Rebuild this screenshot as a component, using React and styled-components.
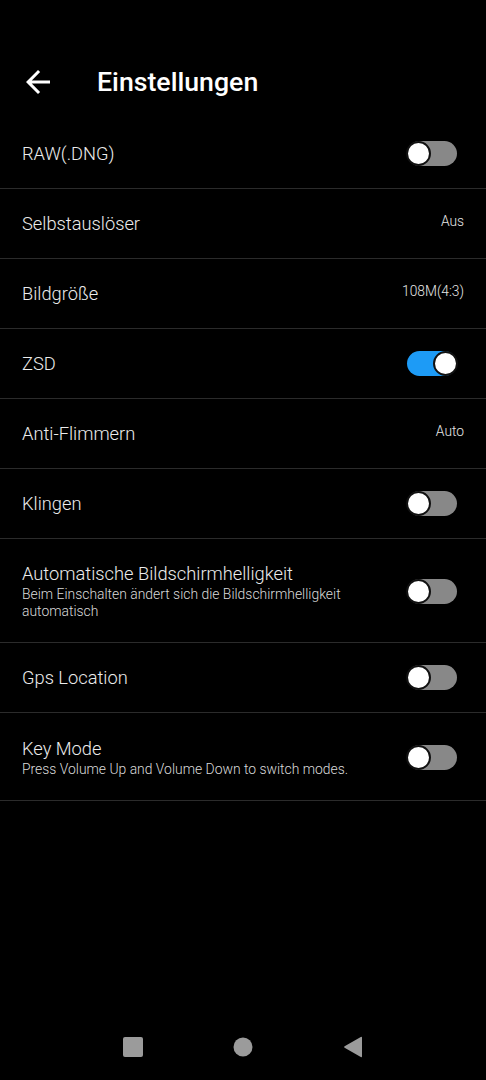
import React from 'react';
import styled, { createGlobalStyle } from 'styled-components';

const GlobalStyle = createGlobalStyle`
  html, body {
    margin: 0;
    padding: 0;
    background: #000;
  }
  body {
    font-family: Roboto, "Noto Sans", "Liberation Sans", sans-serif;
    color: #e8e8e8;
  }
`;

const Screen = styled.div`
  min-height: 100vh;
  display: flex;
  flex-direction: column;
  background: #000;
`;

const Header = styled.header`
  height: 119px;
  padding-top: 45px;
  box-sizing: border-box;
  display: flex;
  align-items: center;
  padding-left: 20px;
`;

const BackButton = styled.button`
  width: 36px;
  height: 36px;
  padding: 0;
  border: 0;
  background: none;
  color: #fff;
  display: flex;
  align-items: center;
  justify-content: center;
`;

const Title = styled.h1`
  margin: 0 0 0 41px;
  font-size: 26.7px;
  font-weight: 500;
  color: #fff;
`;

const List = styled.div`
  display: flex;
  flex-direction: column;
`;

const Row = styled.div`
  display: flex;
  align-items: center;
  justify-content: space-between;
  box-sizing: border-box;
  min-height: ${p => p.$min || 70}px;
  padding: ${p => (p.$sub ? '24px 22px 22px' : '0 22px')};
  border-bottom: 1px solid #2b2b2b;
`;

const Texts = styled.div`
  flex: 1;
  display: flex;
  flex-direction: column;
  padding-right: 44px;
`;

const Label = styled.div`
  font-size: 18.3px;
  font-weight: 300;
  line-height: 22px;
  color: #ececec;
`;

const Sub = styled.div`
  font-size: 13.9px;
  font-weight: 300;
  line-height: 17px;
  color: #dadada;
  margin-top: 1px;
`;

const Value = styled.div`
  font-size: 13.8px;
  font-weight: 300;
  color: #e6e6e6;
  margin-bottom: 5px;
`;

const Track = styled.div`
  width: 50px;
  height: 25px;
  border-radius: 13px;
  background: ${p => (p.$on ? '#1d9bf6' : '#888')};
  display: flex;
  align-items: center;
  justify-content: ${p => (p.$on ? 'flex-end' : 'flex-start')};
  margin-right: 7px;
  flex-shrink: 0;
`;

const Knob = styled.div`
  width: 21px;
  height: 21px;
  border-radius: 50%;
  background: #fff;
  border: 2px solid #111;
  box-sizing: content-box;
  margin: 0 -1px;
`;

const NavBar = styled.nav`
  margin-top: auto;
  height: 66px;
  display: flex;
  align-items: center;
  justify-content: center;
`;

const NavSlot = styled.div`
  width: 110px;
  display: flex;
  justify-content: center;
`;

const Switch = ({ on }) => (
  <Track $on={on}>
    <Knob />
  </Track>
);

const items = [
  { label: 'RAW(.DNG)', toggle: false },
  { label: 'Selbstauslöser', value: 'Aus' },
  { label: 'Bildgröße', value: '108M(4:3)' },
  { label: 'ZSD', toggle: true },
  { label: 'Anti-Flimmern', value: 'Auto' },
  { label: 'Klingen', toggle: false },
  {
    label: 'Automatische Bildschirmhelligkeit',
    sub: 'Beim Einschalten ändert sich die Bildschirmhelligkeit automatisch',
    toggle: false,
  },
  { label: 'Gps Location', toggle: false },
  {
    label: 'Key Mode',
    sub: 'Press Volume Up and Volume Down to switch modes.',
    toggle: false,
    min: 88,
  },
];

const App = () => (
  <Screen>
    <GlobalStyle />
    <Header>
      <BackButton aria-label="Zurück">
        <svg width="36" height="36" viewBox="0 0 24 24" fill="currentColor">
          <path d="M20 11H7.83l5.59-5.59L12 4l-8 8 8 8 1.41-1.41L7.83 13H20v-2z" />
        </svg>
      </BackButton>
      <Title>Einstellungen</Title>
    </Header>
    <List>
      {items.map(item => (
        <Row key={item.label} $sub={!!item.sub} $min={item.min}>
          <Texts>
            <Label>{item.label}</Label>
            {item.sub && <Sub>{item.sub}</Sub>}
          </Texts>
          {item.value !== undefined ? (
            <Value>{item.value}</Value>
          ) : (
            <Switch on={item.toggle} />
          )}
        </Row>
      ))}
    </List>
    <NavBar>
      <NavSlot>
        <svg width="20" height="20" viewBox="0 0 20 20">
          <rect x="0" y="0" width="20" height="20" rx="2" fill="#9b9b9b" />
        </svg>
      </NavSlot>
      <NavSlot>
        <svg width="20" height="20" viewBox="0 0 20 20">
          <circle cx="10" cy="10" r="9.5" fill="#9b9b9b" />
        </svg>
      </NavSlot>
      <NavSlot>
        <svg width="20" height="22" viewBox="0 0 20 22">
          <path d="M19 1.5v19a.8.8 0 0 1-1.2.6L1.6 11.7a.8.8 0 0 1 0-1.4L17.8.9A.8.8 0 0 1 19 1.5z" fill="#9b9b9b" />
        </svg>
      </NavSlot>
    </NavBar>
  </Screen>
);

export default App;
